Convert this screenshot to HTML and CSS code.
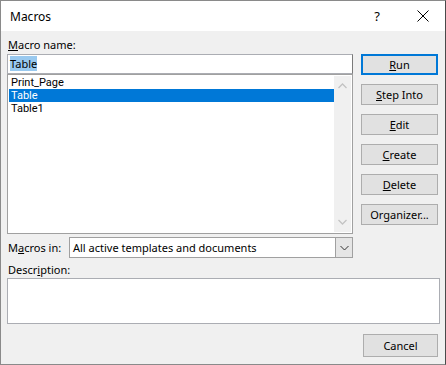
FILE: index.html
```html
<!DOCTYPE html>
<html>
<head>
<meta charset="utf-8">
<link rel="stylesheet" href="styles.css">
</head>
<body>
<div class="window">
  <div class="titlebar">
    <span class="title">Macros</span>
    <span class="help">?</span>
    <span class="close"><svg width="12" height="12" viewBox="0 0 12 12"><path d="M0.5 0.5 L11.5 11.5 M11.5 0.5 L0.5 11.5" stroke="#000" stroke-width="1" fill="none"/></svg></span>
  </div>
  <div class="content">
    <div class="main">
      <div class="leftcol">
        <div class="label"><u>M</u>acro name:</div>
        <div class="input"><span class="sel">Table</span></div>
        <div class="list">
          <div class="items">
            <div class="item">Print_Page</div>
            <div class="item selected">Table</div>
            <div class="item">Table1</div>
          </div>
          <div class="scrollbar">
            <svg class="arrow" width="9" height="6" viewBox="0 0 9 6"><path d="M0.5 5 L4.5 1 L8.5 5" stroke="#c3c3c3" stroke-width="1.3" fill="none"/></svg>
            <svg class="arrow" width="9" height="6" viewBox="0 0 9 6"><path d="M0.5 1 L4.5 5 L8.5 1" stroke="#c3c3c3" stroke-width="1.3" fill="none"/></svg>
          </div>
        </div>
      </div>
      <div class="buttons">
        <div class="btn default"><u>R</u>un</div>
        <div class="btn"><u>S</u>tep Into</div>
        <div class="btn"><u>E</u>dit</div>
        <div class="btn"><u>C</u>reate</div>
        <div class="btn"><u>D</u>elete</div>
        <div class="btn">Or<u>g</u>anizer...</div>
      </div>
    </div>
    <div class="macrosin">
      <div class="label inl">M<u>a</u>cros in:</div>
      <div class="combo">
        <div class="combotext">All active templates and documents</div>
        <div class="dropbtn"><svg width="9" height="6" viewBox="0 0 9 6"><path d="M0.5 1 L4.5 5 L8.5 1" stroke="#333" stroke-width="1" fill="none"/></svg></div>
      </div>
    </div>
    <div class="label desc">Descr<u>i</u>ption:</div>
    <div class="descbox"></div>
    <div class="footer">
      <div class="btn cancel">Cancel</div>
    </div>
  </div>
</div>
</body>
</html>
```

FILE: styles.css
```css
* { box-sizing: border-box; }
html, body { margin: 0; padding: 0; }
body {
  font-family: "Noto Sans", "Open Sans", sans-serif;
  font-size: 11px;
  color: #000;
  background: #f0f0f0;
}
u { text-decoration: underline; text-underline-offset: 1px; }
.window {
  width: 446px;
  height: 365px;
  border: 1px solid #8a8a8a;
  border-right-color: #4a4a4a;
  background: #f0f0f0;
  display: flex;
  flex-direction: column;
}
.titlebar {
  height: 30px;
  background: #fff;
  display: flex;
  align-items: center;
  flex-shrink: 0;
}
.title {
  padding-left: 9px;
  font-size: 12px;
  flex: 1;
}
.help {
  width: 46px;
  text-align: center;
  font-size: 13px;
  padding-left: 2px;
}
.close {
  width: 46px;
  display: flex;
  justify-content: center;
  align-items: center;
  padding-left: 1px;
}
.content {
  padding: 6px 6px 0 6px;
  display: flex;
  flex-direction: column;
}
.main {
  display: flex;
}
.leftcol {
  width: 346px;
  display: flex;
  flex-direction: column;
}
.label {
  height: 17px;
  line-height: 16px;
  padding-left: 1px;
}
.input {
  height: 20px;
  background: #fff;
  border: 1px solid #abadb3;
  border-right-color: #7a7a7a;
  padding: 1px 2px;
  line-height: 16px;
}
.sel {
  background: #99c9ef;
}
.list {
  height: 160px;
  background: #fff;
  border: 1px solid #a0a0a0;
  display: flex;
  padding: 1px;
}
.items {
  flex: 1;
}
.item {
  height: 13px;
  line-height: 13px;
  padding-left: 2px;
  font-family: Roboto, "Noto Sans", sans-serif;
  font-size: 11px;
}
.item.selected {
  background: #0078d7;
  color: #fff;
}
.scrollbar {
  width: 17px;
  background: #f0f0f0;
  display: flex;
  flex-direction: column;
  justify-content: space-between;
  align-items: center;
  padding: 7px 0 7px;
}
.buttons {
  margin-left: 8px;
  padding-top: 17px;
  display: flex;
  flex-direction: column;
  gap: 9px;
}
.btn {
  width: 77px;
  height: 21px;
  background: #e1e1e1;
  border: 1px solid #adadad;
  text-align: center;
  line-height: 19px;
}
.btn.default {
  border: 2px solid #0078d7;
  line-height: 17px;
}
.macrosin {
  display: flex;
  align-items: center;
  margin-top: 3px;
  height: 21px;
}
.label.inl {
  width: 62px;
  height: auto;
}
.combo {
  width: 284px;
  height: 21px;
  background: #fff;
  border: 1px solid #a0a0a0;
  display: flex;
}
.combotext {
  flex: 1;
  padding-left: 3px;
  line-height: 19px;
}
.dropbtn {
  width: 17px;
  background: #e5e5e5;
  border-left: 1px solid #a0a0a0;
  display: flex;
  align-items: center;
  justify-content: center;
}
.desc {
  margin-top: 3px;
  height: 17px;
  line-height: 17px;
}
.descbox {
  width: 433px;
  height: 46px;
  background: #fff;
  border: 1px solid #abadb3;
}
.footer {
  display: flex;
  justify-content: flex-end;
  margin-top: 10px;
  padding-right: 1px;
}
.btn.cancel {
  width: 75px;
  height: 23px;
  line-height: 21px;
}
```
